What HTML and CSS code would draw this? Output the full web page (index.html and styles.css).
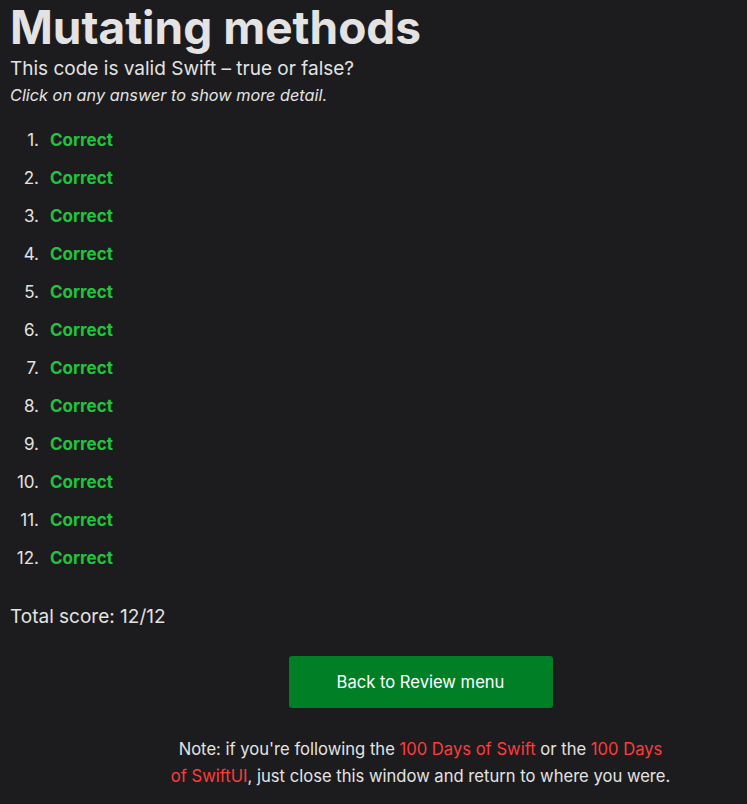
FILE: index.html
```html
<!DOCTYPE html>
<html lang="en">
<head>
<meta charset="utf-8">
<title>Mutating methods</title>
<link rel="stylesheet" href="styles.css">
</head>
<body>
<main class="page">
  <h1 class="title">Mutating methods</h1>
  <p class="subtitle">This code is valid Swift – true or false?</p>
  <p class="hint">Click on any answer to show more detail.</p>
  <ol class="answers">
    <li><span class="correct">Correct</span></li>
    <li><span class="correct">Correct</span></li>
    <li><span class="correct">Correct</span></li>
    <li><span class="correct">Correct</span></li>
    <li><span class="correct">Correct</span></li>
    <li><span class="correct">Correct</span></li>
    <li><span class="correct">Correct</span></li>
    <li><span class="correct">Correct</span></li>
    <li><span class="correct">Correct</span></li>
    <li><span class="correct">Correct</span></li>
    <li><span class="correct">Correct</span></li>
    <li><span class="correct">Correct</span></li>
  </ol>
  <p class="score">Total score: 12/12</p>
  <div class="footer">
    <a class="button" href="#">Back to Review menu</a>
    <p class="note">Note: if you're following the <a href="#">100 Days of Swift</a> or the <a href="#">100 Days of SwiftUI</a>, just close this window and return to where you were.</p>
  </div>
</main>
</body>
</html>
```
FILE: styles.css
```css
html, body {
  margin: 0;
  padding: 0;
  background: #1c1c1e;
}
body {
  font-family: Inter, "Noto Sans", sans-serif;
  color: #e3e3e3;
}
.page {
  padding: 0 10px;
}
.title {
  margin: 0 0 2px;
  padding-top: 1px;
  font-size: 46px;
  line-height: 52px;
  font-weight: 700;
  color: #e3e3e3;
}
.subtitle {
  margin: 0;
  font-size: 19px;
  line-height: 28px;
}
.hint {
  margin: -1px 0 0;
  font-size: 16.3px;
  font-style: italic;
  line-height: 26px;
}
.answers {
  list-style: none;
  margin: 13px 0 0;
  padding: 0;
  font-size: 17px;
  counter-reset: item;
}
.answers li {
  display: flex;
  line-height: 38px;
  counter-increment: item;
}
.answers li::before {
  content: counter(item) ".";
  width: 29px;
  margin-right: 11px;
  text-align: right;
  color: #e3e3e3;
}
.correct {
  color: #1fc53a;
  font-weight: 700;
}
.score {
  margin: 26px 0 0;
  font-size: 19px;
  line-height: 28px;
}
.footer {
  display: flex;
  flex-direction: column;
  align-items: center;
  padding-left: 94px;
  margin-top: 25px;
}
.button {
  display: flex;
  align-items: center;
  justify-content: center;
  width: 264px;
  height: 52px;
  background: #007f26;
  color: #ffffff;
  border-radius: 3px;
  text-decoration: none;
  font-size: 16.6px;
}
.note {
  margin: 28px 0 0;
  max-width: 500px;
  text-align: center;
  font-size: 16.6px;
  line-height: 27px;
}
.note a {
  color: #ff3b3b;
  text-decoration: none;
}
```
